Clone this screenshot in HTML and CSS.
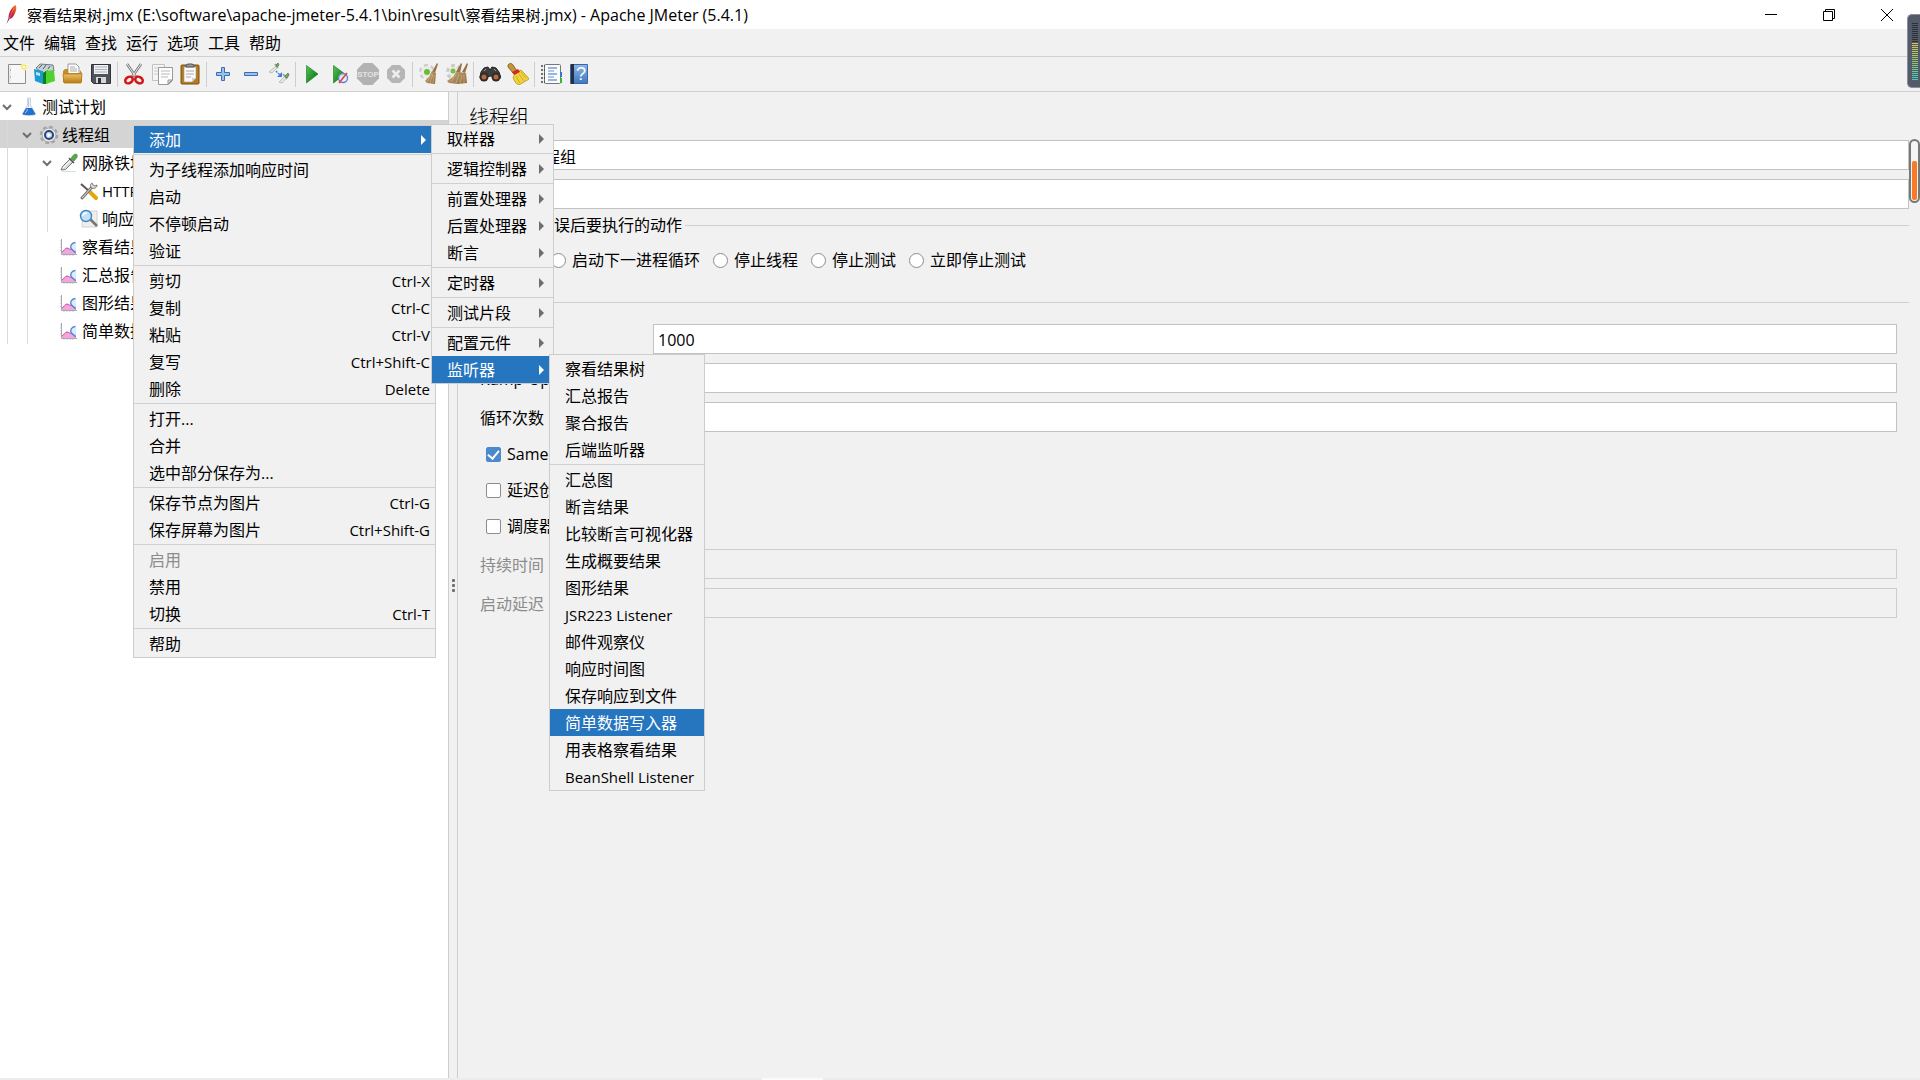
FILE: index.html
```html
<!DOCTYPE html>
<html lang="zh-CN">
<head>
<meta charset="utf-8">
<title>察看结果树.jmx - Apache JMeter (5.4.1)</title>
<link rel="stylesheet" href="styles.css">
</head>
<body>
<svg class="defs" aria-hidden="true">
  <defs>
    <linearGradient id="gBlue" x1="0" y1="0" x2="0" y2="1"><stop offset="0" stop-color="#8fb6ea"/><stop offset="1" stop-color="#3f77c0"/></linearGradient>
    <linearGradient id="gGreen" x1="0" y1="0" x2="1" y2="1"><stop offset="0" stop-color="#52c552"/><stop offset="1" stop-color="#006c10"/></linearGradient>
    <linearGradient id="gGold" x1="0" y1="0" x2="0" y2="1"><stop offset="0" stop-color="#edc06a"/><stop offset="1" stop-color="#b97a10"/></linearGradient>
    <linearGradient id="gFeather" x1="1" y1="0" x2="0" y2="1"><stop offset="0" stop-color="#f08a1d"/><stop offset=".45" stop-color="#cf2037"/><stop offset="1" stop-color="#5b2a7c"/></linearGradient>
    <linearGradient id="gStraw" x1="0" y1="0" x2="1" y2="1"><stop offset="0" stop-color="#c0a078"/><stop offset="1" stop-color="#94703f"/></linearGradient>
    <symbol id="i-chart" viewBox="0 0 20 20">
      <path d="M2.500 2v15.500H18" fill="none" stroke="#a9a9b4"/>
      <path d="M1 4h1M1 7h1M1 10h1M1 13h1M5 18v1M8 18v1M11 18v1M14 18v1" stroke="#c5c5cc"/>
      <path d="M3 15c2-1 3-4 5-4s2 2 4 1 3-2 5-1v6H3z" fill="#f3a6dc"/>
      <path d="M3 15c2-1 3-4 5-4s2 2 4 1 3-2 5-1" fill="none" stroke="#c44b9c"/>
      <path d="M12 12c-1-4 2-6 5-6v6c-1 4-4 3-5 0z" fill="#dcecff"/>
      <path d="M16.500 5.500c-4 0-6 4-4 6.500s3 2 4 4" fill="none" stroke="#4d82d0" stroke-width="1.300"/>
    </symbol>
    <symbol id="i-gear" viewBox="0 0 20 20">
      <circle cx="10" cy="10" r="8" fill="none" stroke="#a4a4a4" stroke-width="2.600" stroke-dasharray="3.600 2.680"/>
      <circle cx="10" cy="10" r="7" fill="#e8e8e8" stroke="#a8a8a8"/>
      <circle cx="10" cy="10" r="4" fill="#bfd2ef" stroke="#28477c" stroke-width="2"/>
      <path d="M8.500 7.500l4 2.500-4 2.500z" fill="#fff"/>
    </symbol>
    <symbol id="i-dropper" viewBox="0 0 20 20">
      <path d="M3 18.500h14" stroke="#ddd"/>
      <path d="M2 17l1.500-3.500L11 6l3 3-7.500 7.500z" fill="#d8dcd8" stroke="#777"/>
      <path d="M4 15l7-7" stroke="#fff"/>
      <path d="M10 5l5 5" stroke="#555" stroke-width="1.600"/>
      <path d="M12 6c1-3 3-5 5-5 2 1 2 3-2 7z" fill="#5ba54d" stroke="#3b7a33" stroke-width=".6"/>
    </symbol>
    <symbol id="i-search" viewBox="0 0 20 20">
      <path d="M4 2h14v16H3z" fill="#eee" stroke="#d2d2d2"/>
      <path d="M11 10l7 7" stroke="#777" stroke-width="2.600"/>
      <circle cx="7" cy="7" r="5.500" fill="#bfe0f6" stroke="#4585bd" stroke-width="1.400"/>
      <path d="M4 7c0-2 2-3 4-3" fill="none" stroke="#fff" stroke-width="1.500"/>
    </symbol>
    <symbol id="i-tools" viewBox="0 0 20 20">
      <path d="M2 3l8 7" stroke="#555" stroke-width="2"/>
      <path d="M11 11l6 6" stroke="#e0a70e" stroke-width="4" stroke-linecap="round"/>
      <path d="M3 17L13 6" stroke="#777" stroke-width="3" stroke-linecap="round"/>
      <path d="M3 17L13 6" stroke="#ddd" stroke-width="1"/>
      <path d="M13 2c-2 1-2 4 0 5s5 0 5-3l-2 1-2-1z" fill="#ddd" stroke="#777"/>
    </symbol>
    <symbol id="i-flask" viewBox="0 0 20 20">
      <path d="M8.500 1h3v7l5 9c0 2-13 2-13 0l5-9z" fill="#eef2f6" stroke="#c3c9d0" stroke-width=".8"/>
      <path d="M7 11h6l3.500 6c0 1.500-13 1.500-13 0z" fill="#2471cd"/>
      <path d="M8 12c1 2-1 3-2 4M9.500 2v8" fill="none" stroke="#a9cdf6"/>
    </symbol>
    <symbol id="i-chev" viewBox="0 0 14 14"><path d="M3 5l4 4 4-4" fill="none" stroke="#6e6e6e" stroke-width="2"/></symbol>
  </defs>
</svg>

<div class="app">
  <header class="titlebar">
    <svg class="feather" viewBox="0 0 12 20"><path d="M10.500 0c2 3 0 8-2 11-1 2-3 3-4 3l-3 5 2-6c0-4 2-10 7-13z" fill="url(#gFeather)"/><path d="M9 3L4 14" stroke="#e9a0a0" stroke-width=".5"/></svg>
    <h1 class="title"><span class="han">察看结果树</span>.jmx (E:\software\apache-jmeter-5.4.1\bin\result\<span class="han">察看结果树</span>.jmx) - Apache JMeter (5.4.1)</h1>
    <div class="winbtns">
      <button class="winbtn" aria-label="最小化"><svg viewBox="0 0 14 14"><path d="M1 6.500h12" stroke="#000"/></svg></button>
      <button class="winbtn" aria-label="还原"><svg viewBox="0 0 14 14"><path d="M1.500 3.500h9v9h-9zM3.500 3v-1.500h9v9H11" fill="none" stroke="#000"/></svg></button>
      <button class="winbtn" aria-label="关闭"><svg viewBox="0 0 14 14"><path d="M1 1l12 12M13 1L1 13" stroke="#000"/></svg></button>
    </div>
  </header>

  <nav class="menubar">
    <button>文件</button><button>编辑</button><button>查找</button><button>运行</button><button>选项</button><button>工具</button><button>帮助</button>
  </nav>

  <div class="toolbar" role="toolbar">
    <button class="tool" aria-label="新建"><svg viewBox="0 0 22 22"><path d="M2.500 1.500h17v19h-17z" fill="#f7f7f7" stroke="#8d8d8d"/><path d="M4 3v16" stroke="#ddd"/><path d="M4 7h1M4 14h1" stroke="#888"/><circle cx="18" cy="4" r="3.500" fill="#fff6b0"/><circle cx="18" cy="4" r="2" fill="#fff" stroke="#eedb4c"/></svg></button>
    <button class="tool" aria-label="模板"><svg viewBox="0 0 22 22"><path d="M2 5l4-4 13 1 1 6-9 4z" fill="#c9d0d4" stroke="#6d7b83"/><path d="M5 5l3-3M9 6l3-4M14 6l2-3" stroke="#4f5e66"/><path d="M0 6l9 2v13l-8-3z" fill="#1c9ad2"/><path d="M2 9l4 1v3l-4-1z" fill="#bfe6f5"/><path d="M9 10l5-3v13l-5 1z" fill="#158c25"/><path d="M12 8l8-1 1 11-9 3z" fill="#4fd22d"/><path d="M9 10l3-2v13l-3 0z" fill="#0d7b20"/></svg></button>
    <button class="tool" aria-label="打开"><svg viewBox="0 0 22 22"><path d="M6 1h8l3 3v8H6z" fill="#fff" stroke="#999"/><path d="M8 4h5M8 6h7M8 8h7" stroke="#aaa"/><path d="M1 8l2-2h3v4h12V7l2 3v9H1z" fill="#c58d25"/><path d="M1 11h19l-1 9H2z" fill="url(#gGold)" stroke="#b27b18" stroke-width=".8"/></svg></button>
    <button class="tool" aria-label="保存"><svg viewBox="0 0 22 22"><path d="M1.500 1.500h19v19h-17l-2-2z" fill="#50545a" stroke="#303338"/><path d="M4 2h14v9H4z" fill="#f2f2f2"/><path d="M5 4h12M5 6.500h12M5 9h12" stroke="#a8b0b8"/><path d="M6 14h10v6H6z" fill="#d4d7da"/><path d="M8 15h3v5H8z" fill="#333"/></svg></button>
    <span class="sep"></span>
    <button class="tool" aria-label="剪切"><svg viewBox="0 0 22 22"><path d="M4 1l9 13M18 1L9 14" stroke="#777" stroke-width="2.600"/><path d="M4 1l9 13M18 1L9 14" stroke="#eee"/><ellipse cx="6" cy="17" rx="4" ry="3" fill="none" stroke="#d51414" stroke-width="2.500" transform="rotate(-30 6 17)"/><ellipse cx="16" cy="17" rx="4" ry="3" fill="none" stroke="#d51414" stroke-width="2.500" transform="rotate(30 16 17)"/></svg></button>
    <button class="tool" aria-label="复制"><svg viewBox="0 0 22 22"><path d="M1.500 1.500h12v16h-12z" fill="#f4f4f4" stroke="#c2c2c2"/><path d="M3 5h7M3 8h4M3 11h4" stroke="#ccc"/><path d="M7.500 4.500h14v13l-4 4h-10z" fill="#fdfdfd" stroke="#999"/><path d="M10 8h9M10 11h9M10 14h7" stroke="#bbb"/><path d="M17 21v-4h4z" fill="#ddd" stroke="#999"/></svg></button>
    <button class="tool" aria-label="粘贴"><svg viewBox="0 0 22 22"><rect x="2" y="2" width="18" height="19" rx="1" fill="#b87a1c" stroke="#79500f"/><path d="M5 4h12v11l-4 4H5z" fill="#fafafa" stroke="#999" stroke-width=".6"/><path d="M7 8h8M7 11h8M7 14h5" stroke="#aaa"/><path d="M7 4V2l2-1h4l2 1v2z" fill="#999" stroke="#555"/><path d="M13 19v-4h4z" fill="#d0d0d0"/></svg></button>
    <span class="sep"></span>
    <button class="tool" aria-label="展开"><svg viewBox="0 0 22 22"><path d="M9.500 4.500h3v5h5v3h-5v5h-3v-5h-5v-3h5z" fill="#9cc0ee" stroke="#3c6fb0"/></svg></button>
    <button class="tool" aria-label="折叠"><svg viewBox="0 0 22 22"><path d="M4.500 9.500h13v3h-13z" fill="#9cc0ee" stroke="#3c6fb0"/></svg></button>
    <button class="tool" aria-label="切换"><svg viewBox="0 0 22 22"><path d="M1 9l7-6 2 1-6 6zM11 19l6-6 2 1-5 6z" fill="#e5e8e5" stroke="#a9aca9" stroke-width=".7"/><path d="M7 1l3 4M15 11l4 5" stroke="#9b9b9b" stroke-width="1.600"/><path d="M8 2l2-2 1 2-2 2zM17 13l3-3 1 2-2 3z" fill="#74a66a" stroke="#5d9153"/><path d="M8 8l5 5" stroke="#3e7cd8" stroke-width="1.400" stroke-dasharray="2 1"/><path d="M14 9v5H9z" fill="#3e7cd8"/></svg></button>
    <span class="sep"></span>
    <button class="tool" aria-label="启动"><svg viewBox="0 0 22 22"><path d="M5.500 2.500L17 11 5.500 20z" fill="url(#gGreen)" stroke="#14751a" stroke-width=".6"/></svg></button>
    <button class="tool" aria-label="不停顿启动"><svg viewBox="0 0 22 22"><path d="M4.500 2.500L16 11 4.500 20z" fill="url(#gGreen)" stroke="#14751a" stroke-width=".6"/><circle cx="14" cy="15" r="4.500" fill="#e4ecf8" fill-opacity=".9" stroke="#6287c8" stroke-width="1.400"/><path d="M10 20l8-10" stroke="#e04040" stroke-width="1.500"/></svg></button>
    <button class="tool" aria-label="停止" disabled><svg viewBox="0 0 22 22"><path d="M6.500 0h9L22 6.500v9L15.500 22h-9L0 15.500v-9z" fill="#b2b2b2"/><text x="11" y="14" text-anchor="middle" class="stop">STOP</text></svg></button>
    <button class="tool" aria-label="关闭线程" disabled><svg viewBox="0 0 22 22"><path d="M7 2h8l5 5v8l-5 5H7l-5-5V7z" fill="#b6b6b6"/><path d="M7.500 7.500l7 7M14.500 7.500l-7 7" stroke="#ececec" stroke-width="2.600"/></svg></button>
    <span class="sep"></span>
    <button class="tool" aria-label="清除"><svg viewBox="0 0 22 22"><circle cx="9" cy="9" r="6" fill="#ececec" stroke="#c8cac8" stroke-width="4" stroke-dasharray="3.500 2.700"/><circle cx="9" cy="9" r="6" fill="#e9ebe9"/><circle cx="9" cy="9" r="3" fill="#69bd35"/><path d="M19 0l1 1-3 9-3-1z" fill="#9a7145"/><path d="M14 8l4 2-1 11-8-1-2-2 4-4z" fill="url(#gStraw)"/><path d="M14 11l-5 8M15 11l-3 9M16 12l-1 8" stroke="#d0b084" stroke-width=".7"/></svg></button>
    <button class="tool" aria-label="清除全部"><svg viewBox="0 0 22 22"><circle cx="8" cy="9" r="6" fill="#ececec" stroke="#c8cac8" stroke-width="4" stroke-dasharray="3.500 2.700"/><circle cx="8" cy="9" r="5" fill="#e9ebe9"/><circle cx="7" cy="8" r="2.500" fill="#79bd45"/><path d="M15 0l1 1-2 9-4-1zM21 0l1 1-3 9-3-1z" fill="#9a7145"/><path d="M10 9l10 1 1 10-9 1-9-1-2-2 6-4z" fill="url(#gStraw)"/><path d="M10 11l-5 8M13 11l-3 9M16 12l-2 8M18 12v8" stroke="#d0b084" stroke-width=".7"/></svg></button>
    <span class="sep"></span>
    <button class="tool" aria-label="查找"><svg viewBox="0 0 22 22"><path d="M2 9l3-4 4-1 2 3 2-3 4 1 3 4 2 6-10-2-11 2z" fill="#3e3e3e" stroke="#222"/><path d="M5 8l2-2M15 6l2 2" stroke="#9b9b9b"/><circle cx="5" cy="14" r="4.500" fill="#2c2c2c"/><circle cx="17" cy="14" r="4.500" fill="#2c2c2c"/><circle cx="5" cy="14" r="2.500" fill="#b8683a"/><circle cx="17" cy="14" r="2.500" fill="#b8683a"/></svg></button>
    <button class="tool" aria-label="清除搜索"><svg viewBox="0 0 22 22"><path d="M1 2c1-2 4-2 5 0l4 6-4 2-5-6z" fill="#c79439" stroke="#7d5718" stroke-width=".8"/><path d="M10 9l4-2c3 3 6 6 8 9l-10 6c-3-1-5-4-6-8z" fill="#f1d23c" stroke="#b79516" stroke-width=".8"/><path d="M5 9l6-3 2 3-6 3z" fill="#d02a20"/><path d="M9 13l4 7M12 11l5 7M14 9l5 6" stroke="#c09c1c" stroke-width=".7"/></svg></button>
    <span class="sep"></span>
    <button class="tool" aria-label="函数助手"><svg viewBox="0 0 22 22"><rect x="4.500" y="1.500" width="16" height="19" rx="1" fill="#f9fafc" stroke="#777"/><path d="M8 5h9M8 11h9M8 17h9" stroke="#3b6fc4"/><path d="M8 8h6M8 14h6" stroke="#6a90cc"/><path d="M1 3h4M1 7h4M1 11h4M1 15h4M1 19h4" stroke="#444" stroke-width="1.500" stroke-dasharray="2 1"/><path d="M20 9h2v5h-2z" fill="#2b78d8"/><path d="M20 15h2v5h-2z" fill="#3bb23b"/></svg></button>
    <button class="tool" aria-label="帮助"><svg viewBox="0 0 22 22"><path d="M2.500 1.500h17v19h-17z" fill="url(#gBlue)" stroke="#3a66a8"/><path d="M3 1h3v20H3z" fill="#26303c"/><text x="13" y="17" text-anchor="middle" class="qm">?</text></svg></button>
  </div>

  <main class="main">
    <section class="tree" role="tree">
      <div class="row"><svg class="chev"><use href="#i-chev"/></svg><svg class="ico"><use href="#i-flask"/></svg><span>测试计划</span></div>
      <div class="row selected"><i></i><svg class="chev"><use href="#i-chev"/></svg><svg class="ico"><use href="#i-gear"/></svg><span>线程组</span></div>
      <div class="row"><i></i><i></i><svg class="chev"><use href="#i-chev"/></svg><svg class="ico"><use href="#i-dropper"/></svg><span>网脉铁塔</span></div>
      <div class="row"><i></i><i></i><i></i><b class="chev"></b><svg class="ico"><use href="#i-tools"/></svg><span class="latin">HTTP</span></div>
      <div class="row"><i></i><i></i><i></i><b class="chev"></b><svg class="ico"><use href="#i-search"/></svg><span>响应</span></div>
      <div class="row"><i></i><i></i><b class="chev"></b><svg class="ico"><use href="#i-chart"/></svg><span>察看结果树</span></div>
      <div class="row"><i></i><i></i><b class="chev"></b><svg class="ico"><use href="#i-chart"/></svg><span>汇总报告</span></div>
      <div class="row"><i></i><i></i><b class="chev"></b><svg class="ico"><use href="#i-chart"/></svg><span>图形结果</span></div>
      <div class="row"><i></i><i></i><b class="chev"></b><svg class="ico"><use href="#i-chart"/></svg><span>简单数据写入器</span></div>
    </section>
    <div class="divider" role="separator"><span></span><span></span><span></span></div>
    <form class="panel">
      <h2>线程组</h2>
      <div class="field head"><label for="name">名称：</label><input id="name" type="text" value="线程组"></div>
      <div class="field head"><label for="comment">注释：</label><input id="comment" type="text"></div>
      <fieldset class="actions">
        <legend>在取样器错误后要执行的动作</legend>
        <div class="radios">
          <label><input type="radio" name="act">继续</label>
          <label><input type="radio" name="act">启动下一进程循环</label>
          <label><input type="radio" name="act">停止线程</label>
          <label><input type="radio" name="act">停止测试</label>
          <label><input type="radio" name="act">立即停止测试</label>
        </div>
      </fieldset>
      <fieldset class="props">
        <legend>线程属性</legend>
        <div class="field"><label for="threads">线程数：</label><input id="threads" type="text" value="1000"></div>
        <div class="field"><label for="ramp">Ramp-Up时间（秒）：</label><input id="ramp" type="text"></div>
        <div class="field"><label for="loops">循环次数</label><input id="loops" type="text"></div>
        <div class="checks">
          <label><input type="checkbox" checked>Same user</label>
          <label><input type="checkbox">延迟创建</label>
          <label><input type="checkbox">调度器</label>
        </div>
        <div class="field off"><label for="duration">持续时间</label><input id="duration" type="text" disabled></div>
        <div class="field off"><label for="delay">启动延迟</label><input id="delay" type="text" disabled></div>
      </fieldset>
    </form>
  </main>
  <footer class="edge"><span></span></footer>
</div>

<div class="popup context" role="menu">
  <button class="on arrow">添加</button>
  <hr>
  <button>为子线程添加响应时间</button>
  <button>启动</button>
  <button>不停顿启动</button>
  <button>验证</button>
  <hr>
  <button>剪切<kbd>Ctrl-X</kbd></button>
  <button>复制<kbd>Ctrl-C</kbd></button>
  <button>粘贴<kbd>Ctrl-V</kbd></button>
  <button>复写<kbd>Ctrl+Shift-C</kbd></button>
  <button>删除<kbd>Delete</kbd></button>
  <hr>
  <button>打开...</button>
  <button>合并</button>
  <button>选中部分保存为...</button>
  <hr>
  <button>保存节点为图片<kbd>Ctrl-G</kbd></button>
  <button>保存屏幕为图片<kbd>Ctrl+Shift-G</kbd></button>
  <hr>
  <button disabled>启用</button>
  <button>禁用</button>
  <button>切换<kbd>Ctrl-T</kbd></button>
  <hr>
  <button>帮助</button>
</div>

<div class="popup add" role="menu">
  <button class="arrow">取样器</button>
  <hr>
  <button class="arrow">逻辑控制器</button>
  <hr>
  <button class="arrow">前置处理器</button>
  <button class="arrow">后置处理器</button>
  <button class="arrow">断言</button>
  <hr>
  <button class="arrow">定时器</button>
  <hr>
  <button class="arrow">测试片段</button>
  <hr>
  <button class="arrow">配置元件</button>
  <button class="on arrow">监听器</button>
</div>

<div class="popup listeners" role="menu">
  <button>察看结果树</button>
  <button>汇总报告</button>
  <button>聚合报告</button>
  <button>后端监听器</button>
  <hr>
  <button>汇总图</button>
  <button>断言结果</button>
  <button>比较断言可视化器</button>
  <button>生成概要结果</button>
  <button>图形结果</button>
  <button class="latin">JSR223 Listener</button>
  <button>邮件观察仪</button>
  <button>响应时间图</button>
  <button>保存响应到文件</button>
  <button class="on">简单数据写入器</button>
  <button>用表格察看结果</button>
  <button class="latin">BeanShell Listener</button>
</div>

<div class="meter"></div>
<div class="capsule"><span></span></div>
</body>
</html>
```
FILE: styles.css
```css
* { box-sizing: border-box; }

body {
  margin: 0;
  position: relative;
  overflow-x: hidden;
  background: #f1f1f1;
  color: #000;
  font: 16px/24px "Open Sans", "Noto Sans CJK SC", sans-serif;
}

button, input {
  font: inherit;
  color: inherit;
  margin: 0;
}

button {
  border: 0;
  background: none;
  padding: 0;
}

.defs { position: absolute; width: 0; height: 0; }

.app {
  display: flex;
  flex-direction: column;
  min-height: 100vh;
}

/* title bar */
.titlebar {
  display: flex;
  align-items: center;
  height: 29px;
  background: #fff;
  padding: 0 4px 0 5px;
}
.feather { width: 12px; height: 20px; margin-right: 10px; }
.title {
  flex: 1;
  margin: 0;
  font-size: 16px;
  font-weight: 400;
  white-space: nowrap;
}
.han, .latin { font-size: 15px; }
.winbtns { display: flex; }
.winbtn { width: 58px; height: 28px; display: grid; place-items: center; }
.winbtn svg { width: 14px; height: 14px; }

/* menu bar */
.menubar {
  display: flex;
  gap: 9px;
  height: 28px;
  padding: 2px 3px;
  border-bottom: 1px solid #d0d0d0;
}

/* tool bar */
.toolbar {
  display: flex;
  align-items: center;
  height: 35px;
  padding: 0 3px;
  border-bottom: 1px solid #d0d0d0;
}
.tool { width: 28px; height: 28px; display: grid; place-items: center; }
.tool svg { width: 22px; height: 22px; }
.sep { width: 1px; height: 25px; margin: 0 2px; background: #cdcdcd; }
.stop { font: 700 8px "Liberation Sans", sans-serif; fill: #e4e4e4; }
.qm { font: 18px "Liberation Sans", sans-serif; fill: #fff; }

/* panes */
.main { flex: 1; display: flex; }

.tree {
  flex: 0 0 449px;
  background: #fff;
  border-right: 1px solid #cdcdcd;
}
.row {
  display: flex;
  align-items: center;
  height: 28px;
  padding-top: 2px;
  white-space: nowrap;
  overflow: hidden;
}
.row i {
  flex: none;
  align-self: stretch;
  width: 20px;
  margin: -2px -7px 0 7px;
  border-left: 1px solid #d9d9d9;
}
.row.selected { background: #d4d4d4; }
.chev { flex: none; width: 14px; height: 14px; margin-right: 5px; }
.ico { flex: none; width: 20px; height: 20px; margin-right: 3px; }

.divider {
  flex: 0 0 8px;
  display: flex;
  flex-direction: column;
  align-items: center;
  justify-content: center;
  gap: 2px;
}
.divider span { width: 3px; height: 3px; border-radius: 1px; background: #6e6e6e; }

.panel {
  flex: 1;
  min-width: 0;
  padding: 11px 11px 0 8px;
  border-left: 1px solid #cdcdcd;
}
h2 { margin: 0 0 7px 3px; font-size: 20px; line-height: 30px; font-weight: 300; }

.field { display: flex; align-items: center; height: 30px; margin-bottom: 9px; }
.field label { flex: 0 0 173px; padding-top: 2px; }
.head label { flex-basis: 57px; }
.field input {
  flex: 1;
  min-width: 0;
  height: 30px;
  padding: 2px 4px 0;
  border: 1px solid #c2c2c2;
  background: #fff;
}
.field.off label { color: #8c8c8c; }
.field input:disabled { background: #f1f1f1; border-color: #cdcdcd; }

fieldset { margin: 0; padding: 0; border: 0; border-top: 1px solid #d0d0d0; min-width: 0; }
legend { padding: 0 3px; line-height: 24px; }
.head + .actions { margin-top: -5px; }
.actions { padding: 11px 0 18px 5px; }
.radios { display: flex; gap: 13px; padding-left: 14px; }
.radios label, .checks label { display: flex; align-items: center; gap: 6px; height: 24px; white-space: nowrap; }
.radios input, .checks input {
  appearance: none;
  width: 15px;
  height: 15px;
  border: 1px solid #8c8c8c;
  background: #fff;
}
.radios input { border-radius: 50%; }
.checks input { border-radius: 2px; }
.checks input:checked {
  border-color: #4b88cc;
  background: #4b88cc;
  display: grid;
  place-items: center;
}
.checks input:checked::after {
  content: "";
  width: 5px;
  height: 9px;
  margin-bottom: 2px;
  border: solid #fff;
  border-width: 0 2px 2px 0;
  transform: rotate(40deg);
}

.props { padding: 10px 12px 0 14px; }
.props legend { margin-left: -14px; }
.actions legend { margin-left: -5px; }
.actions legend, .props legend { padding-left: 8px; }
.checks { display: flex; flex-direction: column; gap: 12px; padding: 1px 0 11px 6px; }

.edge { height: 2px; background: #ececec; display: flex; justify-content: center; }
.edge span { width: 61px; background: #fafafa; margin-right: 335px; }

/* pop-up menus, laid over the window */
.popup {
  position: absolute;
  display: flex;
  flex-direction: column;
  background: #f1f1f1;
  border: 1px solid #cdcdcd;
}
.context { left: 133px; top: 125px; width: 303px; }
.add { left: 431px; top: 124px; width: 123px; }
.listeners { left: 549px; top: 354px; width: 156px; }
.popup button {
  display: flex;
  align-items: center;
  justify-content: space-between;
  height: 27px;
  padding: 0 5px 0 15px;
  white-space: nowrap;
}
.popup button:disabled { color: #8c8c8c; }
.popup button.on { background: #2675bf; color: #fff; }
.popup hr { width: 100%; height: 3px; margin: 0; border: solid #f1f1f1; border-width: 1px 0; background: #d0d0d0; }
.popup kbd { font: inherit; font-size: 15px; }
.arrow::after {
  content: "";
  margin-right: 4px;
  border: solid transparent;
  border-width: 5px 0 5px 5px;
  border-left-color: #6e6e6e;
}
.arrow.on::after { border-left-color: #fff; }

/* desktop gadgets docked at the right edge */
.meter {
  position: absolute;
  right: 0;
  top: 14px;
  width: 13px;
  height: 74px;
  border: 1px solid #8a8f9a;
  border-right: 0;
  border-radius: 5px 0 0 5px;
  background: #535b6b;
}
.meter::before {
  content: "";
  position: absolute;
  left: 4px;
  top: 8px;
  width: 6px;
  height: 58px;
  background:
    repeating-linear-gradient(transparent 0 1px, #535b6b 1px 2px),
    linear-gradient(#2c3039 34%, #e0c34c 35%, #a3c45c 60%, #3ed0c0);
}
.capsule {
  position: absolute;
  right: 0;
  top: 139px;
  width: 11px;
  height: 64px;
  border: 2px solid #777;
  border-radius: 6px;
  background: #f4f4f4;
  display: flex;
  align-items: flex-end;
  justify-content: center;
  padding-bottom: 1px;
}
.capsule span { width: 5px; height: 39px; border-radius: 2px; background: #f97924; }
```
